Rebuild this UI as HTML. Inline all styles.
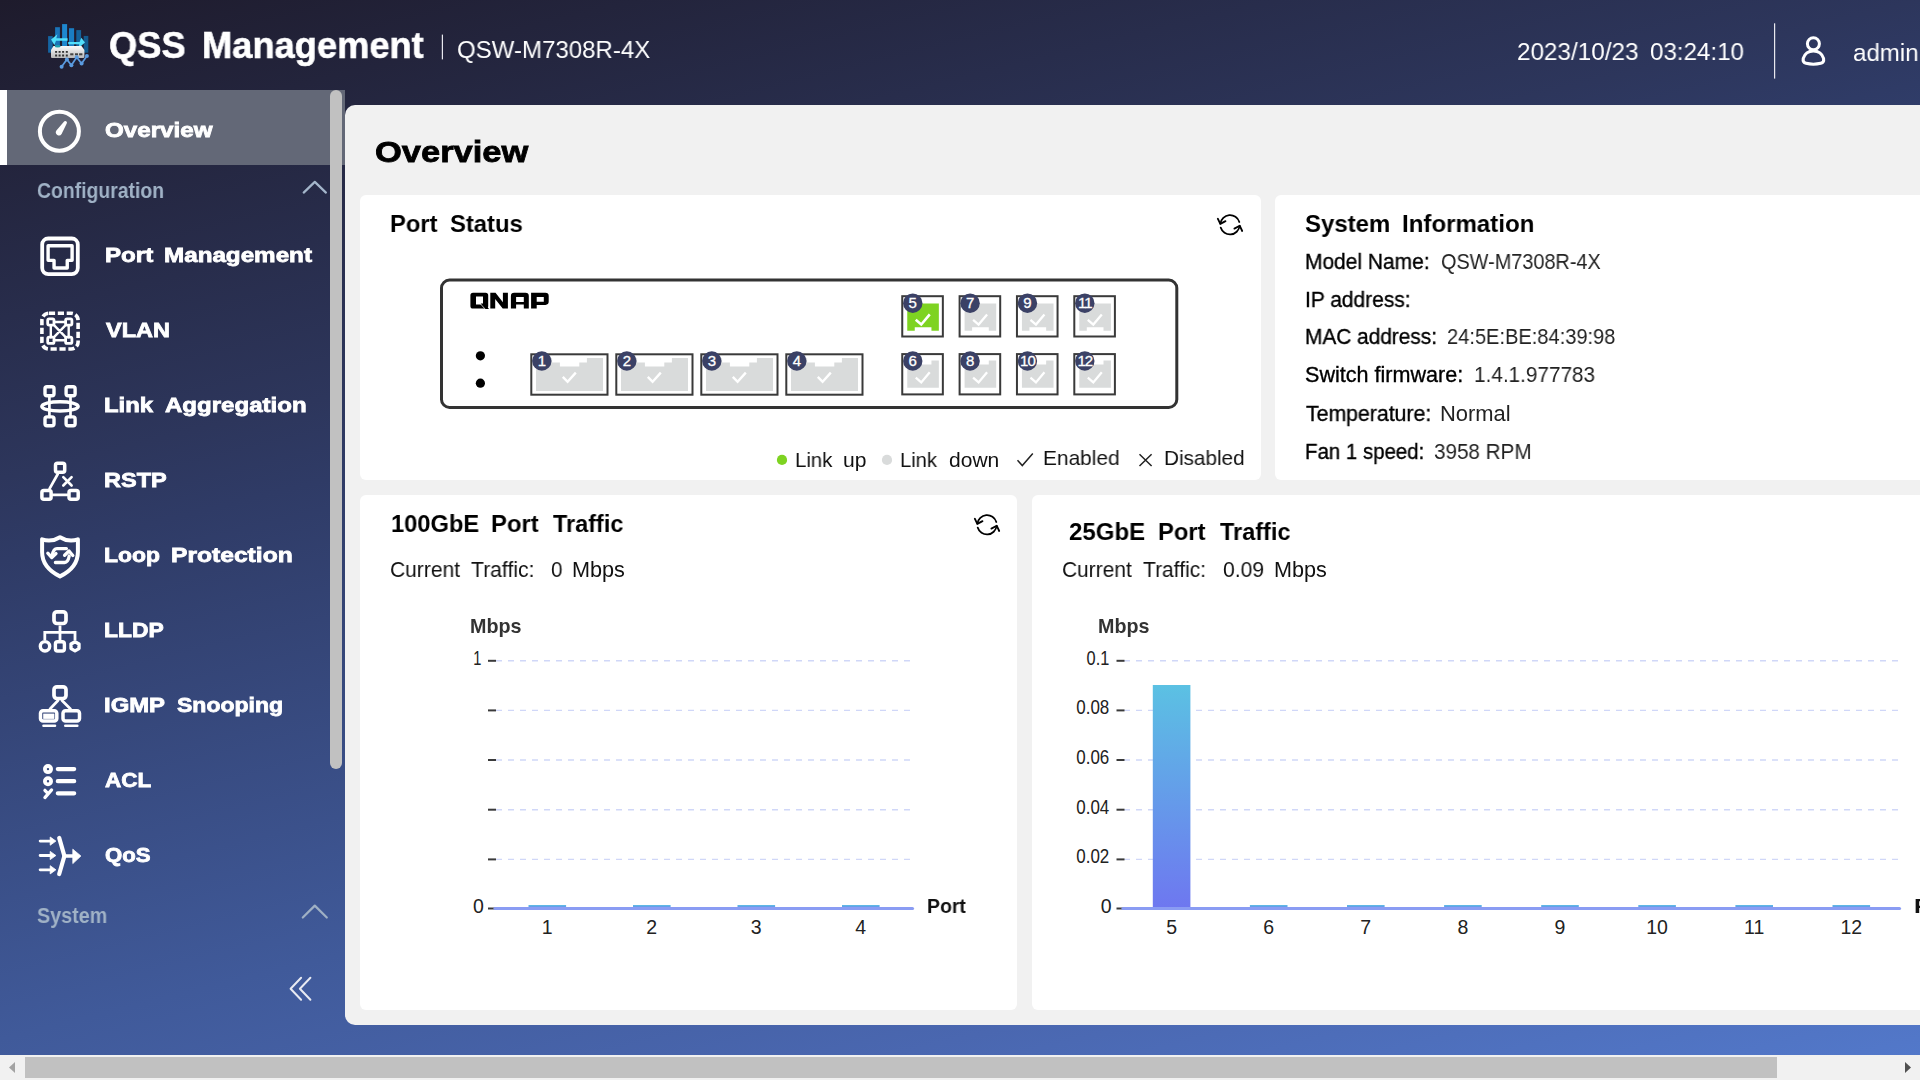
<!DOCTYPE html><html><head><meta charset="utf-8"><title>QSS Management</title><style>
html,body{margin:0;padding:0;width:1920px;height:1080px;overflow:hidden}
body{position:relative;background:linear-gradient(166deg,#1e1b2c 0%,#2d365c 30.7%,#2f3b66 36%,#405a9a 66.7%,#4a67b0 82%,#5277c8 97.3%,#537acc 100%);font-family:'Liberation Sans',sans-serif}
.a{position:absolute}
.t{position:absolute;line-height:1;white-space:pre;transform-origin:0 0;will-change:transform;font-family:'Liberation Sans',sans-serif}
svg{position:absolute;left:0;top:0;overflow:visible}
</style></head><body>
<div class="a" style="left:0;top:90px;width:7px;height:75px;background:#fff"></div>
<div class="a" style="left:7px;top:90px;width:338px;height:75px;background:#636877"></div>
<div class="a" style="left:330px;top:90px;width:12px;height:679px;border-radius:6px;background:#c1c1c1"></div>
<div class="a" style="left:345px;top:105px;width:1700px;height:920px;border-radius:10px 0 0 10px;background:#f1f1f1"></div>
<div class="a" style="left:360px;top:195px;width:900.5px;height:285px;border-radius:6px;background:#fff"></div>
<div class="a" style="left:1275px;top:195px;width:800px;height:285px;border-radius:6px;background:#fff"></div>
<div class="a" style="left:360px;top:495px;width:657.4px;height:515px;border-radius:6px;background:#fff"></div>
<div class="a" style="left:1032px;top:495px;width:1000px;height:515px;border-radius:6px;background:#fff"></div>
<div class="a" style="left:0;top:1055px;width:1920px;height:25px;background:#f1f1f1"></div>
<div class="a" style="left:25px;top:1057px;width:1752px;height:21px;background:#c1c1c1"></div>
<svg width="1920" height="1080" viewBox="0 0 1920 1080">
<g transform="translate(44,20)">
<rect x="4.1" y="16.1" width="4.6" height="16.6" fill="#1565a3"/>
<rect x="11.1" y="7.2" width="4.8" height="23" fill="#1a74b8"/>
<rect x="18.1" y="4.1" width="5" height="26" fill="#1e88cf"/>
<rect x="25" y="8.2" width="5.1" height="22" fill="#1a7dc2"/>
<rect x="32.3" y="10.1" width="4.8" height="20" fill="#14629a"/>
<rect x="39.7" y="15.9" width="4.6" height="16.8" fill="#125a8e"/>
<polygon points="7.1,19.6 13.4,14.2 12.3,18.3 23.6,18.3 23.6,20.8 12.0,20.8 10.4,25.2" fill="#52e0fb"/>
<polygon points="41,22.6 37.3,17.8 35.6,22.1 24.2,22.1 24.2,24.2 35.3,24.2 34.3,28.2" fill="#52e0fb"/>
<defs><linearGradient id="swg" x1="0" y1="0" x2="0" y2="1"><stop offset="0" stop-color="#fafafa"/><stop offset="0.35" stop-color="#e6e6e6"/><stop offset="1" stop-color="#b9b9b9"/></linearGradient></defs>
<path d="M9.5 26 H37.5 L40.4 30 V37 Q40.4 38 39.4 38 H8 Q7 38 7 37 V30 Z" fill="url(#swg)"/>
<ellipse cx="13.7" cy="26.3" rx="3" ry="1.3" fill="#1fa1b0"/>
<rect x="11.1" y="31" width="2" height="1.8" fill="#333"/>
<rect x="11.1" y="34.5" width="2" height="2" fill="#333"/>
<rect x="14.6" y="31" width="2" height="1.8" fill="#333"/>
<rect x="14.6" y="34.5" width="2" height="2" fill="#333"/>
<rect x="18.1" y="31" width="2" height="1.8" fill="#333"/>
<rect x="18.1" y="34.5" width="2" height="2" fill="#333"/>
<rect x="21.8" y="31" width="2" height="1.8" fill="#333"/>
<rect x="21.8" y="34.5" width="2" height="2" fill="#333"/>
<rect x="26.2" y="33.3" width="3.2" height="2" fill="#444"/>
<rect x="31" y="33.3" width="3" height="2" fill="#444"/>
<rect x="35.1" y="33.3" width="3.3" height="2" fill="#444"/>
<polyline points="17.6,46.7 22.9,39.5 27.4,45.3 32.7,37.3 37.6,43.6 42.9,36.1" fill="none" stroke="#5a9be0" stroke-width="1.7"/>
<circle cx="17.6" cy="46.7" r="2" fill="#5a9be0"/>
<circle cx="22.9" cy="39.5" r="2" fill="#5a9be0"/>
<circle cx="27.4" cy="45.3" r="2" fill="#5a9be0"/>
<circle cx="32.7" cy="37.3" r="2" fill="#5a9be0"/>
<circle cx="37.6" cy="43.6" r="2" fill="#5a9be0"/>
<circle cx="42.9" cy="36.1" r="2" fill="#5a9be0"/>
</g>
<rect x="441.8" y="34.6" width="1.2" height="24.8" fill="#e8e8ee"/>
<rect x="1774" y="23.3" width="1.2" height="55.3" fill="#e8e8ee"/>
<g fill="none" stroke="#fff" stroke-width="3">
<circle cx="1813.4" cy="43.75" r="6"/>
<path d="M1806 63.3 Q1802.5 62.5 1803.2 58.5 C1804.8 53.3 1808.6 51 1813.4 51 C1818.2 51 1822 53.3 1823.6 58.5 Q1824.3 62.5 1820.8 63.3 Q1813.4 65 1806 63.3 Z"/>
</g>
<g fill="none" stroke="#fff" stroke-linecap="round" stroke-linejoin="round">
<circle cx="59.4" cy="131.2" r="19.5" stroke-width="4"/>
<path d="M56.4 130.6 L63.88 121.67 A1.7 1.7 0 0 1 66.72 123.53 L61.6 134.0 A3.1 3.1 0 0 1 56.4 130.6 Z" fill="#fff" stroke="none"/>
<rect x="42.2" y="238.5" width="35.6" height="35.6" rx="6" stroke-width="3.8"/>
<path d="M48.1 245.75 H72.1 V260.35 H67.25 V268.05 H54.05 V260.35 H48.1 Z" stroke-width="3.4"/>
<rect x="41.9" y="313.3" width="36.2" height="35.7" rx="7" stroke-width="3.6" stroke-dasharray="6.2 2.7" stroke-linecap="butt"/>
<rect x="47.7" y="318.9" width="6.3" height="6.2" rx="1.5" stroke-width="2.8"/>
<rect x="65.6" y="318.9" width="6.3" height="6.2" rx="1.5" stroke-width="2.8"/>
<rect x="47.7" y="337.2" width="6.3" height="6.2" rx="1.5" stroke-width="2.8"/>
<rect x="65.6" y="337.2" width="6.3" height="6.2" rx="1.5" stroke-width="2.8"/>
<path d="M54 322 H65.6 M54 340.3 H65.6 M50.8 325.1 V337.2 M68.7 325.1 V337.2 M54 325.1 L65.6 337.2 M65.6 325.1 L54 337.2" stroke-width="2.4"/>
<rect x="45" y="386.8" width="9" height="8.9" rx="2" stroke-width="3.4"/>
<rect x="66.1" y="386.8" width="9" height="8.9" rx="2" stroke-width="3.4"/>
<rect x="45" y="416.9" width="9" height="8.9" rx="2" stroke-width="3.4"/>
<rect x="66.1" y="416.9" width="9" height="8.9" rx="2" stroke-width="3.4"/>
<path d="M49.4 395.7 V416.9 M70.5 395.7 V416.9" stroke-width="2.7"/>
<ellipse cx="60" cy="406.4" rx="18.2" ry="4.6" stroke-width="3.4"/>
<rect x="55.5" y="463.3" width="9.2" height="8.9" rx="2" stroke-width="3.5"/>
<rect x="41.9" y="490.4" width="9.2" height="8.9" rx="2" stroke-width="3.5"/>
<rect x="69" y="490.4" width="9.2" height="8.9" rx="2" stroke-width="3.5"/>
<path d="M57.8 474 L49.6 488.6 M52.8 494.8 H67.2" stroke-width="2.7"/>
<path d="M63.3 477.2 L71.6 485.5 M71.6 477.2 L63.3 485.5" stroke-width="2.6"/>
<path d="M60 537.2 C54.5 540.6 48 541.5 42.1 539.3 L42.1 552 C42.1 563.5 49 571 60 576.4 C71 571 77.9 563.5 77.9 552 L77.9 539.3 C72 541.5 65.5 540.6 60 537.2 Z" stroke-width="4"/>
<path d="M66.4 548.6 H57 Q53.4 548.6 52.2 555.5" stroke-width="3.3"/>
<path d="M47.8 553.2 L51.8 557.6 L56 553.6" stroke-width="3.3"/>
<path d="M55.4 562.5 H64.6 Q68 562.5 69.2 556" stroke-width="3.3"/>
<path d="M64.6 555.3 L69 551 L72.8 555.5" stroke-width="3.3"/>
<rect x="54" y="611.8" width="12" height="11.7" rx="3" stroke-width="3.7"/>
<path d="M60 625.4 V640 M44.8 640 V632.3 H75 V640" stroke-width="2.8" stroke-linecap="butt" stroke-linejoin="miter"/>
<circle cx="45" cy="646.3" r="4.7" stroke-width="3.4"/>
<rect x="55.4" y="641.7" width="9" height="9.3" rx="2.2" stroke-width="3.4"/>
<polygon points="75.00,641.70 78.98,644.00 78.98,648.60 75.00,650.90 71.02,648.60 71.02,644.00" stroke-width="3.4"/>
<rect x="54" y="686.8" width="12" height="11.7" rx="3" stroke-width="3.7"/>
<path d="M58 700.5 L50 709 M62 700.5 L70.5 709" stroke-width="2.7"/>
<rect x="40.5" y="710.7" width="16.3" height="10.3" rx="2.5" stroke-width="3.5"/>
<rect x="63" y="710.7" width="16.5" height="10.3" rx="2.5" stroke-width="3.5"/>
<path d="M43.5 725.8 H55 M65.3 725.8 H77.3" stroke-width="2.6"/>
</g>
<rect x="43.2" y="713.6" width="11.2" height="5.3" fill="#fff"/>
<g fill="none" stroke="#fff" stroke-linecap="round" stroke-linejoin="round">
<circle cx="48" cy="769.1" r="3.1" stroke-width="3.8"/>
<circle cx="48" cy="781.2" r="3.1" stroke-width="3.8"/>
<path d="M57.8 769.1 H74.2 M57.8 781.2 H74.2 M57.8 793.3 H74.2" stroke-width="4.2"/>
<path d="M44.9 790.3 L47.6 793.2 M44.9 797.6 L51.6 789.9" stroke-width="3.2"/>
<path d="M40.1 841.1 H51 M40.1 855.5 H51 M40.1 869.8 H51" stroke-width="2.8"/>
<path d="M59.2 837.9 L64.4 856 L59.2 874" stroke-width="4.2" stroke-linejoin="miter"/>
<path d="M64 856 H73.5" stroke-width="3.6"/>
</g>
<g fill="#fff">
<polygon points="50.2,837.0 55.9,841.1 50.2,845.2" stroke="#fff" stroke-width="0.8" stroke-linejoin="round"/>
<polygon points="50.2,851.4 55.9,855.5 50.2,859.6" stroke="#fff" stroke-width="0.8" stroke-linejoin="round"/>
<polygon points="50.2,865.6999999999999 55.9,869.8 50.2,873.9" stroke="#fff" stroke-width="0.8" stroke-linejoin="round"/>
<polygon points="72.8,849.2 80.9,856 72.8,863.6" stroke="#fff" stroke-width="0.8" stroke-linejoin="round"/>
</g>
<path d="M303.7 192.6 L314.8 181.9 L325.9 192.6" fill="none" stroke="#a4b6cb" stroke-width="2.2" stroke-linecap="round" stroke-linejoin="round"/>
<path d="M302.8 917.5 L314.8 905.6 L326.8 917.5" fill="none" stroke="#9fb0c4" stroke-width="2.2" stroke-linecap="round" stroke-linejoin="round"/>
<path d="M301.1 977.8 L290.6 988.7 L301.1 999.7 M310.4 977.8 L299.9 988.7 L310.4 999.7" fill="none" stroke="#e8eaf2" stroke-width="2" stroke-linecap="round" stroke-linejoin="round"/>
<g fill="none" stroke="#000" stroke-width="1.8" stroke-linecap="round" stroke-linejoin="round"><path d="M1239.3 222.0 A9.7 9.7 0 0 0 1220.4 223.60000000000002"/><path d="M1217.8 218.70000000000002 L1220.3 223.9 L1225.5 221.10000000000002"/><path d="M1220.7 227.60000000000002 A9.7 9.7 0 0 0 1239.6 226.0"/><path d="M1242.2 231.0 L1239.7 225.70000000000002 L1234.4 228.60000000000002"/></g>
<g fill="none" stroke="#000" stroke-width="1.8" stroke-linecap="round" stroke-linejoin="round"><path d="M996.3 522.0 A9.7 9.7 0 0 0 977.4 523.5999999999999"/><path d="M974.8 518.6999999999999 L977.3 523.9 L982.5 521.0999999999999"/><path d="M977.7 527.5999999999999 A9.7 9.7 0 0 0 996.6 526.0"/><path d="M999.2 531.0 L996.7 525.6999999999999 L991.4 528.5999999999999"/></g>
<rect x="441.5" y="280.1" width="735.3" height="127.3" rx="8" fill="none" stroke="#333" stroke-width="3"/>
<g transform="translate(465,288)" fill="#000" fill-rule="evenodd"><path d="M5.4 7.3 Q5.4 4.7 8 4.7 H20.6 Q23.2 4.7 23.2 7.3 V18 Q23.2 20.6 20.6 20.6 H8 Q5.4 20.6 5.4 18 Z M11 8.4 V16.6 H18 V8.4 Z"/><path d="M15.6 15.6 L19.5 15.6 L24 20.9 L20.2 20.9 Z"/><path d="M25.3 4.7 H30.5 L37.9 14.3 V4.7 H42.9 V20.6 H37.7 L30.2 11 V20.6 H25.3 Z"/><path d="M45.9 8 Q45.9 4.7 49.2 4.7 H60.5 Q63.8 4.7 63.8 8 V20.6 H58.8 V16.6 H51.1 V20.6 H45.9 Z M51.1 8.9 V14.1 H58.8 V8.9 Z"/><path d="M66.1 4.7 H80.4 Q83.7 4.7 83.7 8 V13.6 Q83.7 16.9 80.4 16.9 H71.7 V20.6 H66.1 Z M71.7 9.1 V13.8 H78.8 V9.1 Z"/><path d="M14.8 15.2 L20 20.9" stroke="#fff" stroke-width="0.7"/></g>
<circle cx="480.4" cy="355.8" r="4.6" fill="#000"/><circle cx="480.4" cy="383.2" r="4.6" fill="#000"/>
<rect x="531.3" y="354.3" width="76.2" height="40.4" fill="#fff" stroke="#3a3a3a" stroke-width="2"/>
<path d="M536.0 391 V358 H552.0999999999999 V362.4 H559.9 V366.5 H579.3 V362.4 H586.9 V358 H603.0 V391 Z" fill="#d9dbdb"/>
<path d="M562.8 376.8 L567.5999999999999 381.8 L575.8 372.6" fill="none" stroke="#fff" stroke-width="2.4" stroke-linecap="butt" stroke-linejoin="miter"/>
<circle cx="541.8" cy="361" r="9.7" fill="#3b4166"/><text x="541.8" y="366.1" font-family="Liberation Sans" font-size="15" fill="#fff" stroke="#fff" stroke-width="0.3" text-anchor="middle" >1</text>
<rect x="616.3" y="354.3" width="76.2" height="40.4" fill="#fff" stroke="#3a3a3a" stroke-width="2"/>
<path d="M621.0 391 V358 H637.0999999999999 V362.4 H644.9 V366.5 H664.3 V362.4 H671.9 V358 H688.0 V391 Z" fill="#d9dbdb"/>
<path d="M647.8 376.8 L652.5999999999999 381.8 L660.8 372.6" fill="none" stroke="#fff" stroke-width="2.4" stroke-linecap="butt" stroke-linejoin="miter"/>
<circle cx="626.8" cy="361" r="9.7" fill="#3b4166"/><text x="626.8" y="366.1" font-family="Liberation Sans" font-size="15" fill="#fff" stroke="#fff" stroke-width="0.3" text-anchor="middle" >2</text>
<rect x="701.3" y="354.3" width="76.2" height="40.4" fill="#fff" stroke="#3a3a3a" stroke-width="2"/>
<path d="M706.0 391 V358 H722.0999999999999 V362.4 H729.9 V366.5 H749.3 V362.4 H756.9 V358 H773.0 V391 Z" fill="#d9dbdb"/>
<path d="M732.8 376.8 L737.5999999999999 381.8 L745.8 372.6" fill="none" stroke="#fff" stroke-width="2.4" stroke-linecap="butt" stroke-linejoin="miter"/>
<circle cx="711.8" cy="361" r="9.7" fill="#3b4166"/><text x="711.8" y="366.1" font-family="Liberation Sans" font-size="15" fill="#fff" stroke="#fff" stroke-width="0.3" text-anchor="middle" >3</text>
<rect x="786.3" y="354.3" width="76.2" height="40.4" fill="#fff" stroke="#3a3a3a" stroke-width="2"/>
<path d="M791.0 391 V358 H807.0999999999999 V362.4 H814.9 V366.5 H834.3 V362.4 H841.9 V358 H858.0 V391 Z" fill="#d9dbdb"/>
<path d="M817.8 376.8 L822.5999999999999 381.8 L830.8 372.6" fill="none" stroke="#fff" stroke-width="2.4" stroke-linecap="butt" stroke-linejoin="miter"/>
<circle cx="796.8" cy="361" r="9.7" fill="#3b4166"/><text x="796.8" y="366.1" font-family="Liberation Sans" font-size="15" fill="#fff" stroke="#fff" stroke-width="0.3" text-anchor="middle" >4</text>
<rect x="902.25" y="296.2" width="40.6" height="40.3" fill="#fff" stroke="#3a3a3a" stroke-width="2"/>
<path d="M907.25 303.4 H938.85 V330.8 H931.45 V327.3 H914.75 V330.8 H907.25 Z" fill="#7ed321"/>
<path d="M915.75 319.8 L921.25 324.5 L929.75 314.4" fill="none" stroke="#fff" stroke-width="2.6" stroke-linecap="butt" stroke-linejoin="miter"/>
<circle cx="912.75" cy="303.2" r="9.7" fill="#3b4166"/><text x="912.75" y="308.3" font-family="Liberation Sans" font-size="15" fill="#fff" stroke="#fff" stroke-width="0.3" text-anchor="middle" >5</text>
<rect x="902.25" y="354.09999999999997" width="40.6" height="40.3" fill="#fff" stroke="#3a3a3a" stroke-width="2"/>
<path d="M907.25 360.49999999999994 H914.75 V364.4 H931.45 V360.49999999999994 H938.85 V387.79999999999995 H907.25 Z" fill="#d9dbdb"/>
<path d="M915.75 377.7 L921.25 382.4 L929.75 372.29999999999995" fill="none" stroke="#fff" stroke-width="2.3" stroke-linecap="butt" stroke-linejoin="miter"/>
<circle cx="912.75" cy="360.99999999999994" r="9.7" fill="#3b4166"/><text x="912.75" y="366.09999999999997" font-family="Liberation Sans" font-size="15" fill="#fff" stroke="#fff" stroke-width="0.3" text-anchor="middle" >6</text>
<rect x="959.6" y="296.2" width="40.6" height="40.3" fill="#fff" stroke="#3a3a3a" stroke-width="2"/>
<path d="M964.6 303.4 H996.2 V330.8 H988.8000000000001 V327.3 H972.1 V330.8 H964.6 Z" fill="#d9dbdb"/>
<path d="M973.1 319.8 L978.6 324.5 L987.1 314.4" fill="none" stroke="#fff" stroke-width="2.3" stroke-linecap="butt" stroke-linejoin="miter"/>
<circle cx="970.1" cy="303.2" r="9.7" fill="#3b4166"/><text x="970.1" y="308.3" font-family="Liberation Sans" font-size="15" fill="#fff" stroke="#fff" stroke-width="0.3" text-anchor="middle" >7</text>
<rect x="959.6" y="354.09999999999997" width="40.6" height="40.3" fill="#fff" stroke="#3a3a3a" stroke-width="2"/>
<path d="M964.6 360.49999999999994 H972.1 V364.4 H988.8000000000001 V360.49999999999994 H996.2 V387.79999999999995 H964.6 Z" fill="#d9dbdb"/>
<path d="M973.1 377.7 L978.6 382.4 L987.1 372.29999999999995" fill="none" stroke="#fff" stroke-width="2.3" stroke-linecap="butt" stroke-linejoin="miter"/>
<circle cx="970.1" cy="360.99999999999994" r="9.7" fill="#3b4166"/><text x="970.1" y="366.09999999999997" font-family="Liberation Sans" font-size="15" fill="#fff" stroke="#fff" stroke-width="0.3" text-anchor="middle" >8</text>
<rect x="1016.95" y="296.2" width="40.6" height="40.3" fill="#fff" stroke="#3a3a3a" stroke-width="2"/>
<path d="M1021.95 303.4 H1053.55 V330.8 H1046.15 V327.3 H1029.45 V330.8 H1021.95 Z" fill="#d9dbdb"/>
<path d="M1030.45 319.8 L1035.95 324.5 L1044.45 314.4" fill="none" stroke="#fff" stroke-width="2.3" stroke-linecap="butt" stroke-linejoin="miter"/>
<circle cx="1027.45" cy="303.2" r="9.7" fill="#3b4166"/><text x="1027.45" y="308.3" font-family="Liberation Sans" font-size="15" fill="#fff" stroke="#fff" stroke-width="0.3" text-anchor="middle" >9</text>
<rect x="1016.95" y="354.09999999999997" width="40.6" height="40.3" fill="#fff" stroke="#3a3a3a" stroke-width="2"/>
<path d="M1021.95 360.49999999999994 H1029.45 V364.4 H1046.15 V360.49999999999994 H1053.55 V387.79999999999995 H1021.95 Z" fill="#d9dbdb"/>
<path d="M1030.45 377.7 L1035.95 382.4 L1044.45 372.29999999999995" fill="none" stroke="#fff" stroke-width="2.3" stroke-linecap="butt" stroke-linejoin="miter"/>
<circle cx="1027.45" cy="360.99999999999994" r="9.7" fill="#3b4166"/><text x="1027.45" y="366.09999999999997" font-family="Liberation Sans" font-size="15" fill="#fff" stroke="#fff" stroke-width="0.3" text-anchor="middle" letter-spacing="-1">10</text>
<rect x="1074.3" y="296.2" width="40.6" height="40.3" fill="#fff" stroke="#3a3a3a" stroke-width="2"/>
<path d="M1079.3 303.4 H1110.8999999999999 V330.8 H1103.5 V327.3 H1086.8 V330.8 H1079.3 Z" fill="#d9dbdb"/>
<path d="M1087.8 319.8 L1093.3 324.5 L1101.8 314.4" fill="none" stroke="#fff" stroke-width="2.3" stroke-linecap="butt" stroke-linejoin="miter"/>
<circle cx="1084.8" cy="303.2" r="9.7" fill="#3b4166"/><text x="1084.8" y="308.3" font-family="Liberation Sans" font-size="15" fill="#fff" stroke="#fff" stroke-width="0.3" text-anchor="middle" letter-spacing="-1">11</text>
<rect x="1074.3" y="354.09999999999997" width="40.6" height="40.3" fill="#fff" stroke="#3a3a3a" stroke-width="2"/>
<path d="M1079.3 360.49999999999994 H1086.8 V364.4 H1103.5 V360.49999999999994 H1110.8999999999999 V387.79999999999995 H1079.3 Z" fill="#d9dbdb"/>
<path d="M1087.8 377.7 L1093.3 382.4 L1101.8 372.29999999999995" fill="none" stroke="#fff" stroke-width="2.3" stroke-linecap="butt" stroke-linejoin="miter"/>
<circle cx="1084.8" cy="360.99999999999994" r="9.7" fill="#3b4166"/><text x="1084.8" y="366.09999999999997" font-family="Liberation Sans" font-size="15" fill="#fff" stroke="#fff" stroke-width="0.3" text-anchor="middle" letter-spacing="-1">12</text>
<circle cx="782" cy="459.9" r="5.1" fill="#7ed321"/>
<circle cx="887" cy="459.9" r="5.1" fill="#d9dbdb"/>
<path d="M1017.5 460.3 L1022.3 465.6 L1032.8 453.6" fill="none" stroke="#222" stroke-width="1.5"/>
<path d="M1139.5 454.3 L1151.6 466 M1151.6 454.3 L1139.5 466" fill="none" stroke="#222" stroke-width="1.5"/>
<defs><linearGradient id="barg" x1="0" y1="0" x2="0" y2="1" gradientUnits="objectBoundingBox"><stop offset="0" stop-color="#5bc1e3"/><stop offset="1" stop-color="#6e77f0"/></linearGradient></defs>
<line x1="496" y1="660.8" x2="910" y2="660.8" stroke="#d0d7f8" stroke-width="1.4" stroke-dasharray="6 6"/>
<line x1="496" y1="710.4" x2="910" y2="710.4" stroke="#d0d7f8" stroke-width="1.4" stroke-dasharray="6 6"/>
<line x1="496" y1="760.0" x2="910" y2="760.0" stroke="#d0d7f8" stroke-width="1.4" stroke-dasharray="6 6"/>
<line x1="496" y1="809.7" x2="910" y2="809.7" stroke="#d0d7f8" stroke-width="1.4" stroke-dasharray="6 6"/>
<line x1="496" y1="859.4" x2="910" y2="859.4" stroke="#d0d7f8" stroke-width="1.4" stroke-dasharray="6 6"/>
<line x1="488" y1="660.8" x2="496" y2="660.8" stroke="#3a3a3a" stroke-width="2"/>
<line x1="488" y1="710.4" x2="496" y2="710.4" stroke="#3a3a3a" stroke-width="2"/>
<line x1="488" y1="760.0" x2="496" y2="760.0" stroke="#3a3a3a" stroke-width="2"/>
<line x1="488" y1="809.7" x2="496" y2="809.7" stroke="#3a3a3a" stroke-width="2"/>
<line x1="488" y1="859.4" x2="496" y2="859.4" stroke="#3a3a3a" stroke-width="2"/>
<line x1="488" y1="908.5" x2="496" y2="908.5" stroke="#3a3a3a" stroke-width="2"/>
<rect x="528.50" y="905" width="37.6" height="3.50" fill="url(#barg)"/>
<rect x="633.00" y="905" width="37.6" height="3.50" fill="url(#barg)"/>
<rect x="737.50" y="905" width="37.6" height="3.50" fill="url(#barg)"/>
<rect x="842.00" y="905" width="37.6" height="3.50" fill="url(#barg)"/>
<line x1="495" y1="908.5" x2="912.5" y2="908.5" stroke="#8a9cf3" stroke-width="3.2" stroke-linecap="round"/>
<text transform="translate(481.5,665) scale(0.75,1)" x="0" y="0" font-family="Liberation Sans" font-size="19.5" fill="#222" text-anchor="end">1</text>
<text transform="translate(483.8,913) scale(1,1)" x="0" y="0" font-family="Liberation Sans" font-size="19.5" fill="#222" text-anchor="end">0</text>
<text x="547.30" y="934" font-family="Liberation Sans" font-size="19.5" fill="#222" text-anchor="middle">1</text>
<text x="651.80" y="934" font-family="Liberation Sans" font-size="19.5" fill="#222" text-anchor="middle">2</text>
<text x="756.30" y="934" font-family="Liberation Sans" font-size="19.5" fill="#222" text-anchor="middle">3</text>
<text x="860.80" y="934" font-family="Liberation Sans" font-size="19.5" fill="#222" text-anchor="middle">4</text>
<line x1="1124" y1="660.8" x2="1898" y2="660.8" stroke="#d0d7f8" stroke-width="1.4" stroke-dasharray="6 6"/>
<line x1="1124" y1="710.4" x2="1898" y2="710.4" stroke="#d0d7f8" stroke-width="1.4" stroke-dasharray="6 6"/>
<line x1="1124" y1="760.0" x2="1898" y2="760.0" stroke="#d0d7f8" stroke-width="1.4" stroke-dasharray="6 6"/>
<line x1="1124" y1="809.7" x2="1898" y2="809.7" stroke="#d0d7f8" stroke-width="1.4" stroke-dasharray="6 6"/>
<line x1="1124" y1="859.4" x2="1898" y2="859.4" stroke="#d0d7f8" stroke-width="1.4" stroke-dasharray="6 6"/>
<line x1="1116.5" y1="660.8" x2="1124.5" y2="660.8" stroke="#3a3a3a" stroke-width="2"/>
<line x1="1116.5" y1="710.4" x2="1124.5" y2="710.4" stroke="#3a3a3a" stroke-width="2"/>
<line x1="1116.5" y1="760.0" x2="1124.5" y2="760.0" stroke="#3a3a3a" stroke-width="2"/>
<line x1="1116.5" y1="809.7" x2="1124.5" y2="809.7" stroke="#3a3a3a" stroke-width="2"/>
<line x1="1116.5" y1="859.4" x2="1124.5" y2="859.4" stroke="#3a3a3a" stroke-width="2"/>
<line x1="1116.5" y1="908.5" x2="1124.5" y2="908.5" stroke="#3a3a3a" stroke-width="2"/>
<rect x="1152.80" y="685" width="37.6" height="223.50" fill="url(#barg)"/>
<rect x="1249.90" y="905" width="37.6" height="3.50" fill="url(#barg)"/>
<rect x="1347.00" y="905" width="37.6" height="3.50" fill="url(#barg)"/>
<rect x="1444.10" y="905" width="37.6" height="3.50" fill="url(#barg)"/>
<rect x="1541.20" y="905" width="37.6" height="3.50" fill="url(#barg)"/>
<rect x="1638.30" y="905" width="37.6" height="3.50" fill="url(#barg)"/>
<rect x="1735.40" y="905" width="37.6" height="3.50" fill="url(#barg)"/>
<rect x="1832.50" y="905" width="37.6" height="3.50" fill="url(#barg)"/>
<line x1="1123" y1="908.5" x2="1899.5" y2="908.5" stroke="#8a9cf3" stroke-width="3.2" stroke-linecap="round"/>
<text transform="translate(1109.3,665) scale(0.84,1)" x="0" y="0" font-family="Liberation Sans" font-size="19.5" fill="#222" text-anchor="end">0.1</text>
<text transform="translate(1109.3,714.3) scale(0.87,1)" x="0" y="0" font-family="Liberation Sans" font-size="19.5" fill="#222" text-anchor="end">0.08</text>
<text transform="translate(1109.3,764) scale(0.87,1)" x="0" y="0" font-family="Liberation Sans" font-size="19.5" fill="#222" text-anchor="end">0.06</text>
<text transform="translate(1109.3,813.7) scale(0.87,1)" x="0" y="0" font-family="Liberation Sans" font-size="19.5" fill="#222" text-anchor="end">0.04</text>
<text transform="translate(1109.3,863.4) scale(0.87,1)" x="0" y="0" font-family="Liberation Sans" font-size="19.5" fill="#222" text-anchor="end">0.02</text>
<text transform="translate(1111.6,912.7) scale(1,1)" x="0" y="0" font-family="Liberation Sans" font-size="19.5" fill="#222" text-anchor="end">0</text>
<text x="1171.60" y="934" font-family="Liberation Sans" font-size="19.5" fill="#222" text-anchor="middle">5</text>
<text x="1268.70" y="934" font-family="Liberation Sans" font-size="19.5" fill="#222" text-anchor="middle">6</text>
<text x="1365.80" y="934" font-family="Liberation Sans" font-size="19.5" fill="#222" text-anchor="middle">7</text>
<text x="1462.90" y="934" font-family="Liberation Sans" font-size="19.5" fill="#222" text-anchor="middle">8</text>
<text x="1560.00" y="934" font-family="Liberation Sans" font-size="19.5" fill="#222" text-anchor="middle">9</text>
<text x="1657.10" y="934" font-family="Liberation Sans" font-size="19.5" fill="#222" text-anchor="middle">10</text>
<text x="1754.20" y="934" font-family="Liberation Sans" font-size="19.5" fill="#222" text-anchor="middle">11</text>
<text x="1851.30" y="934" font-family="Liberation Sans" font-size="19.5" fill="#222" text-anchor="middle">12</text>
<polygon points="9,1067.5 15,1062 15,1073" fill="#a3a3a3"/>
<polygon points="1905,1062 1911,1067.5 1905,1073" fill="#505050"/>
</svg>
<div class="t" style="left:108.62px;top:26.70px;font-size:37px;font-weight:bold;color:#ffffff;transform:scaleX(0.9803);-webkit-text-stroke:0.6px #ffffff;">QSS</div>
<div class="t" style="left:202.24px;top:26.70px;font-size:37px;font-weight:bold;color:#ffffff;transform:scaleX(0.9804);-webkit-text-stroke:0.6px #ffffff;">Management</div>
<div class="t" style="left:457.03px;top:38.20px;font-size:24.8px;font-weight:normal;color:#ffffff;transform:scaleX(0.9697);">QSW-M7308R-4X</div>
<div class="t" style="left:1517.11px;top:39.80px;font-size:24.6px;font-weight:normal;color:#ffffff;transform:scaleX(0.9868);">2023/10/23</div>
<div class="t" style="left:1649.52px;top:39.80px;font-size:24.6px;font-weight:normal;color:#ffffff;transform:scaleX(0.9819);">03:24:10</div>
<div class="t" style="left:1853.22px;top:41.00px;font-size:24.6px;font-weight:normal;color:#ffffff;transform:scaleX(0.9800);">admin</div>
<div class="t" style="left:104.80px;top:119.60px;font-size:20.4px;font-weight:bold;color:#ffffff;transform:scaleX(1.1846);-webkit-text-stroke:0.8px #ffffff;">Overview</div>
<div class="t" style="left:36.94px;top:179.60px;font-size:22.5px;font-weight:bold;color:#a0b2c6;transform:scaleX(0.8614);">Configuration</div>
<div class="t" style="left:104.62px;top:244.90px;font-size:20.4px;font-weight:bold;color:#ffffff;transform:scaleX(1.1825);-webkit-text-stroke:0.8px #ffffff;">Port</div>
<div class="t" style="left:163.61px;top:244.90px;font-size:20.4px;font-weight:bold;color:#ffffff;transform:scaleX(1.1871);-webkit-text-stroke:0.8px #ffffff;">Management</div>
<div class="t" style="left:105.60px;top:319.90px;font-size:20.4px;font-weight:bold;color:#ffffff;transform:scaleX(1.1509);-webkit-text-stroke:0.8px #ffffff;">VLAN</div>
<div class="t" style="left:104.43px;top:394.90px;font-size:20.4px;font-weight:bold;color:#ffffff;transform:scaleX(1.1707);-webkit-text-stroke:0.8px #ffffff;">Link</div>
<div class="t" style="left:164.70px;top:394.90px;font-size:20.4px;font-weight:bold;color:#ffffff;transform:scaleX(1.1790);-webkit-text-stroke:0.8px #ffffff;">Aggregation</div>
<div class="t" style="left:104.45px;top:469.90px;font-size:20.4px;font-weight:bold;color:#ffffff;transform:scaleX(1.1528);-webkit-text-stroke:0.8px #ffffff;">RSTP</div>
<div class="t" style="left:104.48px;top:544.90px;font-size:20.4px;font-weight:bold;color:#ffffff;transform:scaleX(1.1224);-webkit-text-stroke:0.8px #ffffff;">Loop</div>
<div class="t" style="left:170.99px;top:544.90px;font-size:20.4px;font-weight:bold;color:#ffffff;transform:scaleX(1.2071);-webkit-text-stroke:0.8px #ffffff;">Protection</div>
<div class="t" style="left:104.48px;top:619.90px;font-size:20.4px;font-weight:bold;color:#ffffff;transform:scaleX(1.1212);-webkit-text-stroke:0.8px #ffffff;">LLDP</div>
<div class="t" style="left:104.43px;top:694.90px;font-size:20.4px;font-weight:bold;color:#ffffff;transform:scaleX(1.1706);-webkit-text-stroke:0.8px #ffffff;">IGMP</div>
<div class="t" style="left:177.00px;top:694.90px;font-size:20.4px;font-weight:bold;color:#ffffff;transform:scaleX(1.1290);-webkit-text-stroke:0.8px #ffffff;">Snooping</div>
<div class="t" style="left:105.10px;top:769.70px;font-size:20.4px;font-weight:bold;color:#ffffff;transform:scaleX(1.1048);-webkit-text-stroke:0.8px #ffffff;">ACL</div>
<div class="t" style="left:105.30px;top:844.70px;font-size:20.4px;font-weight:bold;color:#ffffff;transform:scaleX(1.0881);-webkit-text-stroke:0.8px #ffffff;">QoS</div>
<div class="t" style="left:36.82px;top:904.60px;font-size:22.5px;font-weight:bold;color:#a0b2c6;transform:scaleX(0.8782);">System</div>
<div class="t" style="left:374.75px;top:137.00px;font-size:30px;font-weight:bold;color:#000;transform:scaleX(1.1489);-webkit-text-stroke:0.8px #000;">Overview</div>
<div class="t" style="left:389.92px;top:211.90px;font-size:24.3px;font-weight:bold;color:#000;transform:scaleX(0.9771);">Port</div>
<div class="t" style="left:449.82px;top:211.90px;font-size:24.3px;font-weight:bold;color:#000;transform:scaleX(0.9795);">Status</div>
<div class="t" style="left:1304.61px;top:211.90px;font-size:24.3px;font-weight:bold;color:#000;transform:scaleX(0.9869);">System</div>
<div class="t" style="left:1402.41px;top:211.90px;font-size:24.3px;font-weight:bold;color:#000;transform:scaleX(0.9908);">Information</div>
<div class="t" style="left:1305.03px;top:251.60px;font-size:21.5px;font-weight:normal;color:#000;transform:scaleX(0.9738);-webkit-text-stroke:0.35px #000;">Model Name:</div>
<div class="t" style="left:1441.08px;top:251.60px;font-size:21.5px;font-weight:normal;color:#222;transform:scaleX(0.9240);">QSW-M7308R-4X</div>
<div class="t" style="left:1305.03px;top:289.50px;font-size:21.5px;font-weight:normal;color:#000;transform:scaleX(0.9736);-webkit-text-stroke:0.35px #000;">IP address:</div>
<div class="t" style="left:1305.03px;top:327.40px;font-size:21.5px;font-weight:normal;color:#000;transform:scaleX(0.9687);-webkit-text-stroke:0.35px #000;">MAC address:</div>
<div class="t" style="left:1447.27px;top:327.40px;font-size:21.5px;font-weight:normal;color:#222;transform:scaleX(0.9330);">24:5E:BE:84:39:98</div>
<div class="t" style="left:1305.00px;top:365.30px;font-size:21.5px;font-weight:normal;color:#000;transform:scaleX(1.0032);-webkit-text-stroke:0.35px #000;">Switch firmware:</div>
<div class="t" style="left:1473.74px;top:365.30px;font-size:21.5px;font-weight:normal;color:#222;transform:scaleX(0.9645);">1.4.1.977783</div>
<div class="t" style="left:1306.00px;top:403.60px;font-size:21.5px;font-weight:normal;color:#000;transform:scaleX(0.9888);-webkit-text-stroke:0.35px #000;">Temperature:</div>
<div class="t" style="left:1439.96px;top:403.60px;font-size:21.5px;font-weight:normal;color:#222;transform:scaleX(1.0197);">Normal</div>
<div class="t" style="left:1305.05px;top:441.50px;font-size:21.5px;font-weight:normal;color:#000;transform:scaleX(0.9504);-webkit-text-stroke:0.35px #000;">Fan 1 speed:</div>
<div class="t" style="left:1434.44px;top:441.50px;font-size:21.5px;font-weight:normal;color:#222;transform:scaleX(0.9606);">3958 RPM</div>
<div class="t" style="left:794.63px;top:448.90px;font-size:21px;font-weight:normal;color:#111;transform:scaleX(0.9711);">Link</div>
<div class="t" style="left:843.40px;top:448.90px;font-size:21px;font-weight:normal;color:#111;transform:scaleX(1.0045);">up</div>
<div class="t" style="left:900.04px;top:448.90px;font-size:21px;font-weight:normal;color:#111;transform:scaleX(0.9605);">Link</div>
<div class="t" style="left:949.00px;top:448.90px;font-size:21px;font-weight:normal;color:#111;transform:scaleX(1.0021);">down</div>
<div class="t" style="left:1043.01px;top:447.00px;font-size:21px;font-weight:normal;color:#111;transform:scaleX(0.9933);">Enabled</div>
<div class="t" style="left:1163.76px;top:447.00px;font-size:21px;font-weight:normal;color:#111;transform:scaleX(0.9875);">Disabled</div>
<div class="t" style="left:390.53px;top:512.10px;font-size:24.3px;font-weight:bold;color:#000;transform:scaleX(0.9742);">100GbE</div>
<div class="t" style="left:491.42px;top:512.10px;font-size:24.3px;font-weight:bold;color:#000;transform:scaleX(0.9813);">Port</div>
<div class="t" style="left:553.00px;top:512.10px;font-size:24.3px;font-weight:bold;color:#000;transform:scaleX(0.9639);">Traffic</div>
<div class="t" style="left:389.83px;top:558.80px;font-size:21.6px;font-weight:normal;color:#111;transform:scaleX(0.9732);">Current</div>
<div class="t" style="left:471.00px;top:558.80px;font-size:21.6px;font-weight:normal;color:#111;transform:scaleX(0.9794);">Traffic:</div>
<div class="t" style="left:551.05px;top:558.80px;font-size:21.6px;font-weight:normal;color:#111;transform:scaleX(0.9545);">0</div>
<div class="t" style="left:572.30px;top:558.80px;font-size:21.6px;font-weight:normal;color:#111;transform:scaleX(1.0020);">Mbps</div>
<div class="t" style="left:1069.31px;top:519.70px;font-size:24.3px;font-weight:bold;color:#000;transform:scaleX(0.9893);">25GbE</div>
<div class="t" style="left:1157.62px;top:519.70px;font-size:24.3px;font-weight:bold;color:#000;transform:scaleX(0.9771);">Port</div>
<div class="t" style="left:1219.50px;top:519.70px;font-size:24.3px;font-weight:bold;color:#000;transform:scaleX(0.9653);">Traffic</div>
<div class="t" style="left:1061.83px;top:558.90px;font-size:21.6px;font-weight:normal;color:#111;transform:scaleX(0.9690);">Current</div>
<div class="t" style="left:1143.40px;top:558.90px;font-size:21.6px;font-weight:normal;color:#111;transform:scaleX(0.9730);">Traffic:</div>
<div class="t" style="left:1223.22px;top:558.90px;font-size:21.6px;font-weight:normal;color:#111;transform:scaleX(0.9775);">0.09</div>
<div class="t" style="left:1273.80px;top:558.90px;font-size:21.6px;font-weight:normal;color:#111;transform:scaleX(1.0000);">Mbps</div>
<div class="t" style="left:470.40px;top:617.00px;font-size:19.7px;font-weight:bold;color:#333;transform:scaleX(1.0020);">Mbps</div>
<div class="t" style="left:926.91px;top:896.90px;font-size:19.7px;font-weight:bold;color:#111;transform:scaleX(0.9868);">Port</div>
<div class="t" style="left:1098.40px;top:617.30px;font-size:19.7px;font-weight:bold;color:#333;transform:scaleX(1.0000);">Mbps</div>
<div class="t" style="left:1913.75px;top:896.90px;font-size:19.7px;font-weight:bold;color:#111;transform:scaleX(1.2500);">P</div>
</body></html>
